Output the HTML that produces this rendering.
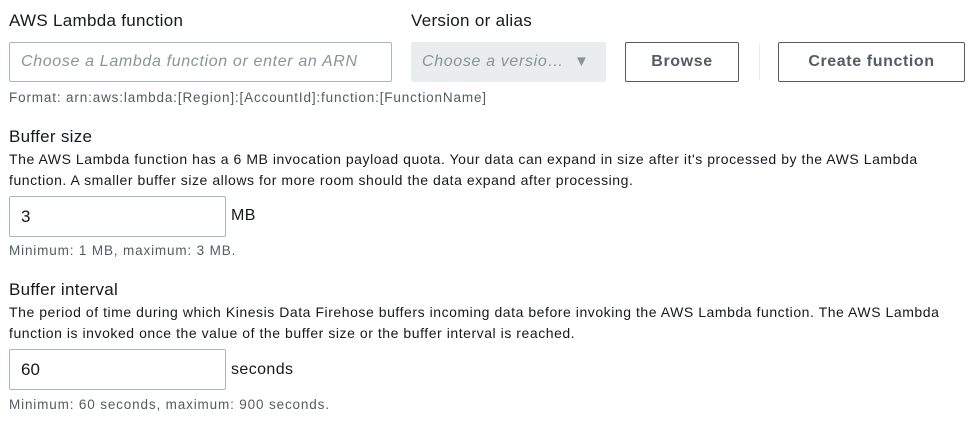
<!DOCTYPE html>
<html><head><style>
*{box-sizing:border-box;margin:0;padding:0}
body{width:975px;height:431px;background:#fff;font-family:"Liberation Sans",sans-serif;color:#16191f;position:relative;overflow:hidden}
.a{position:absolute;white-space:nowrap}
.lbl{font-size:17px;letter-spacing:0.3px;color:#16191f}
.sm{font-size:13.5px;letter-spacing:0.85px;color:#545b64}
.desc{font-size:14px;letter-spacing:0.55px;color:#16191f;line-height:21px}
.box{position:absolute;border:1px solid #aab7b8;border-radius:2px;background:#fff}
.btn{position:absolute;border:1px solid #545b64;border-radius:2px;font-weight:bold;font-size:16px;letter-spacing:0.6px;color:#545b64;display:flex;align-items:center;justify-content:center}
.ph{font-style:italic;color:#879596;font-size:16px;letter-spacing:0.65px}
</style></head><body>
<div class="a lbl" style="left:9px;top:11px">AWS Lambda function</div>
<div class="a lbl" style="left:411px;top:11px">Version or alias</div>
<div class="box" style="left:9px;top:42px;width:383px;height:40px"><span class="a ph" style="left:11px;top:10px">Choose a Lambda function or enter an ARN</span></div>
<div class="box" style="left:411px;top:42px;width:195px;height:40px;background:#eaeded;border-color:#eaeded"><span class="a ph" style="left:10px;top:10px">Choose a versio…</span><span class="a" style="left:162px;top:10px;color:#879596;font-size:15px">▼</span></div>
<div class="btn" style="left:625px;top:42px;width:114px;height:40px">Browse</div>
<div class="a" style="left:759px;top:44px;width:1px;height:36px;background:#eaeded"></div>
<div class="btn" style="left:778px;top:42px;width:187px;height:40px">Create function</div>
<div class="a sm" style="left:9px;top:90px">Format: arn:aws:lambda:[Region]:[AccountId]:function:[FunctionName]</div>
<div class="a lbl" style="left:9px;top:127px">Buffer size</div>
<div class="a desc" style="left:9px;top:149px">The AWS Lambda function has a 6 MB invocation payload quota. Your data can expand in size after it's processed by the AWS Lambda<br>function. A smaller buffer size allows for more room should the data expand after processing.</div>
<div class="box" style="left:9px;top:196px;width:217px;height:41px"><span class="a" style="left:11px;top:10px;font-size:17px">3</span></div>
<div class="a" style="left:231px;top:207px;font-size:16px;letter-spacing:0.4px">MB</div>
<div class="a sm" style="left:9px;top:243px">Minimum: 1 MB, maximum: 3 MB.</div>
<div class="a lbl" style="left:9px;top:280px">Buffer interval</div>
<div class="a desc" style="left:9px;top:302px">The period of time during which Kinesis Data Firehose buffers incoming data before invoking the AWS Lambda function. The AWS Lambda<br>function is invoked once the value of the buffer size or the buffer interval is reached.</div>
<div class="box" style="left:9px;top:349px;width:217px;height:41px"><span class="a" style="left:11px;top:10px;font-size:17px">60</span></div>
<div class="a" style="left:231px;top:361px;font-size:16px;letter-spacing:0.4px">seconds</div>
<div class="a sm" style="left:9px;top:397px">Minimum: 60 seconds, maximum: 900 seconds.</div>
</body></html>
